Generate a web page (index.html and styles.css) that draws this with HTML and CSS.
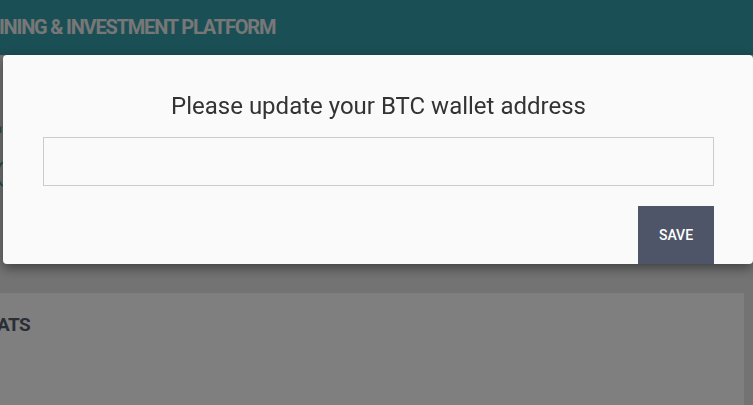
FILE: index.html
```html
<!DOCTYPE html>
<html lang="en">
<head>
<meta charset="utf-8">
<title>Update wallet</title>
<link rel="stylesheet" href="styles.css">
</head>
<body>
<div class="page">
  <header class="topbar">
    <div class="brand">BITCOIN MINING &amp; INVESTMENT PLATFORM</div>
  </header>
  <main class="content">
    <section class="summary">
      <div class="label">available</div>
      <div class="amount">(0.00000000 BTC)</div>
    </section>
    <section class="panel">
      <h2 class="panel-title">STATS</h2>
    </section>
  </main>
</div>
<div class="overlay"></div>
<div class="modal" role="dialog">
  <h1 class="modal-title">Please update your BTC wallet address</h1>
  <input class="wallet-input" type="text" aria-label="BTC wallet address">
  <div class="actions">
    <button class="save-btn" type="button">SAVE</button>
  </div>
</div>
</body>
</html>
```

FILE: styles.css
```css
* { box-sizing: border-box; }
html, body { margin: 0; padding: 0; }
body {
  width: 753px;
  height: 405px;
  overflow: hidden;
  background: #e6e6e6;
  font-family: Roboto, "Liberation Sans", Arial, sans-serif;
}
.page { width: 753px; }
.topbar {
  height: 55px;
  background: #349eaa;
  display: flex;
  align-items: center;
  padding-bottom: 2px;
  overflow: hidden;
}
.brand {
  flex: none;
  margin-left: -90px;
  color: #eeeeee;
  font-weight: 700;
  font-size: 20px;
  letter-spacing: -1.2px;
  white-space: nowrap;
}
.content {
  margin-left: -5px;
  display: flex;
  flex-direction: column;
}
.summary {
  padding-top: 66px;
  height: 238px;
}
.label {
  color: #3a9e8e;
  font-size: 13px;
  line-height: 16px;
}
.amount {
  margin-top: 22px;
  color: #2a9e8a;
  font-size: 24px;
  line-height: 28px;
  white-space: nowrap;
}
.panel {
  margin-left: 5px;
  width: 744px;
  height: 112px;
  background: #ffffff;
  padding-top: 20px;
  overflow: hidden;
}
.panel-title {
  margin: 0 0 0 -24px;
  color: #565d6b;
  font-size: 19px;
  font-weight: 700;
  letter-spacing: -0.7px;
  line-height: 24px;
}
.overlay {
  position: fixed;
  inset: 0;
  background: rgba(0, 0, 0, 0.5);
}
.modal {
  position: absolute;
  top: 55px;
  left: 3px;
  width: 750px;
  height: 209px;
  background: #fafafa;
  border-radius: 4px;
  box-shadow: 0 4px 12px rgba(0, 0, 0, 0.45);
  padding: 37px 39px 0 40px;
  display: flex;
  flex-direction: column;
}
.modal-title {
  margin: 0;
  text-align: center;
  font-weight: 400;
  font-size: 24px;
  line-height: 28px;
  color: #333333;
}
.wallet-input {
  margin-top: 17px;
  height: 49px;
  width: 100%;
  border: 1px solid #cccccc;
  background: #fafafa;
  font-family: inherit;
  font-size: 16px;
  padding: 0 12px;
  outline: none;
}
.actions {
  margin-top: 20px;
  display: flex;
  justify-content: flex-end;
}
.save-btn {
  width: 76px;
  height: 58px;
  border: 0;
  background: #4f5568;
  color: #ffffff;
  font-family: inherit;
  font-size: 14px;
  font-weight: 500;
  cursor: pointer;
}
```
